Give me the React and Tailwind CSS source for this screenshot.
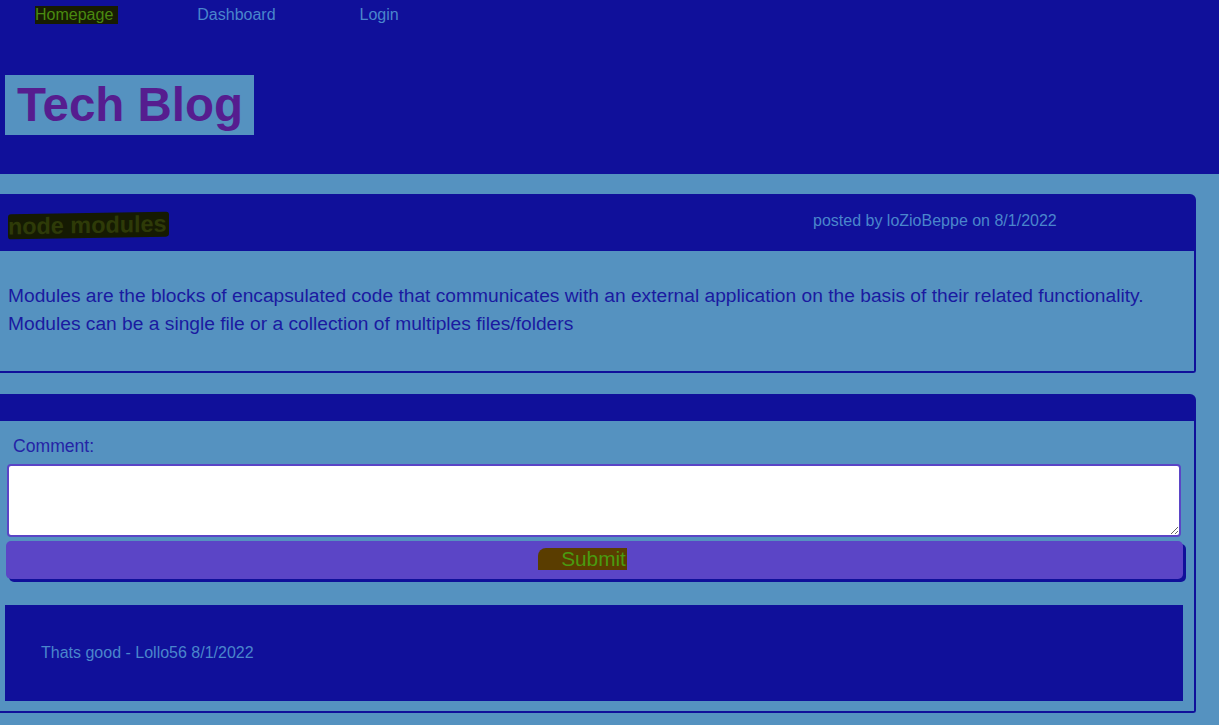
export default function App() {
  return (
    <div className="min-h-[725px] w-[1219px] overflow-hidden bg-[#5592c0] font-['Liberation_Sans',Arial,sans-serif]">
      <header className="h-[174px] bg-[#10109a] pt-[6px]">
        <nav className="flex h-[18px] items-center text-[16px] leading-[18px]">
          <a className="ml-[35px] bg-[#171c02] pr-[5px] text-[#4a8a10]">Homepage</a>
          <a className="ml-[79px] text-[#4a86cc]">Dashboard</a>
          <a className="ml-[84px] text-[#4a86cc]">Login</a>
        </nav>
        <div className="ml-[5px] mt-[51px] flex h-[60px] w-[249px] items-center bg-[#5592c0] pl-[12px]">
          <h1 className="text-[47.5px] font-bold leading-none text-[#561d8f]">Tech Blog</h1>
        </div>
      </header>

      <section className="-ml-[4px] mt-[20px] w-[1200px]">
        <div className="flex h-[57px] items-center rounded-tr-[6px] bg-[#10109a]">
          <div className="w-[817px] pl-[12px] pt-[8px]">
            <h2 className="inline-block rounded-[3px] bg-[#151a02] pr-[2px] text-[23.4px] font-bold leading-[25px] text-[#2e3a08] -skew-y-[1deg]">
              node modules
            </h2>
          </div>
          <span className="-mt-[3px] text-[16px] text-[#4a86cc]">posted by loZioBeppe on 8/1/2022</span>
        </div>
        <div className="rounded-br-[3px] border-b-2 border-r-2 border-[#10109a] pb-[33px] pl-[12px] pt-[31px] text-[19.2px] leading-[28px] text-[#1a1aa0]">
          <p>Modules are the blocks of encapsulated code that communicates with an external application on the basis of their related functionality.</p>
          <p>Modules can be a single file or a collection of multiples files/folders</p>
        </div>
      </section>

      <section className="-ml-[4px] mt-[21px] w-[1200px]">
        <div className="h-[27px] rounded-tr-[6px] bg-[#10109a]" />
        <div className="rounded-br-[3px] border-b-2 border-r-2 border-[#10109a] pb-[10px] pl-[4px] pr-[13px] pt-[15px]">
          <label className="ml-[13px] block text-[17.6px] leading-[20px] text-[#2424a6]">Comment:</label>
          <textarea className="ml-[7px] mt-[8px] block h-[73px] w-[1174px] resize-y rounded-[4px] border-2 border-[#5b45c6] bg-white" />
          <button className="ml-[6px] mt-[4px] flex h-[38px] w-[1177px] items-center justify-center rounded-[5px] bg-[#5b45c6] pb-[3px] text-[20.8px] text-[#4a9a10] shadow-[3px_3px_0_#10109a]">
            <span className="-ml-[24px] rounded-tl-[8px] bg-[#5a3d00] pl-[23px] pr-[1px] leading-[22px]">Submit</span>
          </button>
          <div className="ml-[5px] mt-[26px] flex h-[96px] w-[1178px] items-center bg-[#10109a] pl-[36px] text-[16px] text-[#4a86cc]">
            Thats good - Lollo56 8/1/2022
          </div>
        </div>
      </section>
    </div>
  );
}
